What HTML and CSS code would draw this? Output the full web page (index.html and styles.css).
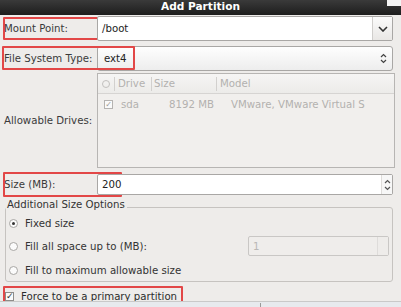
FILE: index.html
```html
<!DOCTYPE html>
<html>
<head>
<meta charset="utf-8">
<title>Add Partition</title>
<link rel="stylesheet" href="styles.css">
</head>
<body>
<div class="title">Add Partition<span class="corner"></span></div>

<div class="row r-mount">
  <span class="hl hl-mount"></span>
  <label class="lbl">Mount Point:</label>
  <div class="entry combo-entry">
    <span class="val">/boot</span>
    <span class="drop">
      <svg width="10" height="6" viewBox="0 0 10 6"><path d="M1 1 L5 5 L9 1" fill="none" stroke="#333" stroke-width="1.6"/></svg>
    </span>
  </div>
</div>

<div class="row r-fs">
  <span class="hl hl-fs"></span>
  <label class="lbl">File System Type:</label>
  <div class="combo">
    <span class="val">ext4</span>
    <svg class="updown" width="7" height="11" viewBox="0 0 7 11"><path d="M1 4 L3.5 1.5 L6 4 M1 7 L3.5 9.5 L6 7" fill="none" stroke="#444" stroke-width="1.2"/></svg>
  </div>
</div>

<div class="row r-drives">
  <label class="lbl">Allowable Drives:</label>
  <div class="tree">
    <div class="thead">
      <span class="c c1"><i class="circ"></i></span>
      <span class="c c2">Drive</span>
      <span class="c c3">Size</span>
      <span class="c c4">Model</span>
    </div>
    <div class="trow">
      <span class="c c1"><i class="chk">&#10003;</i></span>
      <span class="c c2">sda</span>
      <span class="c c3">8192 MB</span>
      <span class="c c4">VMware, VMware Virtual S</span>
    </div>
  </div>
</div>

<div class="row r-size">
  <span class="hl hl-size"></span>
  <label class="lbl">Size (MB):</label>
  <div class="entry spin">
    <span class="val">200</span>
    <span class="arrows">
      <svg width="7" height="14" viewBox="0 0 7 14"><path d="M1 5 L3.5 2.5 L6 5 M1 9 L3.5 11.5 L6 9" fill="none" stroke="#555" stroke-width="1.2"/></svg>
    </span>
  </div>
</div>

<fieldset class="frame">
  <legend>Additional Size Options</legend>
  <div class="opt o1"><i class="radio on"></i>Fixed size</div>
  <div class="opt o2"><i class="radio"></i>Fill all space up to (MB):
    <div class="spin-off"><span class="val">1</span><span class="arrows"></span></div>
  </div>
  <div class="opt o3"><i class="radio"></i>Fill to maximum allowable size</div>
</fieldset>

<div class="row r-force">
  <span class="hl hl-force"></span>
  <i class="cbox">&#10003;</i>Force to be a primary partition
</div>

<div class="strip"><span class="tick"></span></div>
</body>
</html>
```

FILE: styles.css
```css
*{ margin:0; padding:0; box-sizing:border-box;}
body{ width:401px; height:307px; overflow:hidden; position:relative; background:#eeecea; font-family:"DejaVu Sans", sans-serif; font-size:10.2px; color:#3a3a3a;}

.title{ height:15px; background:linear-gradient(#3a3a3a,#1d1d1d); color:#fff; font-weight:bold; font-size:10.6px; line-height:13px; text-align:center; position:relative;}
.corner{ position:absolute; right:0; top:0; width:14px; height:6px; background:#f4f4f4;}

.row{ display:flex; align-items:center; position:relative; padding-left:4px;}
.lbl{ width:93px; white-space:nowrap;}
.hl{ position:absolute; border:2px solid #e24747; border-radius:1px;}

.entry{ width:296px; background:#fff; border:1px solid #a9a7a5; border-radius:2px; display:flex; align-items:center; position:relative;}
.val{ padding-left:4px; color:#222;}

.r-mount{ margin-top:1px; height:25px;}
.r-mount .entry{ height:25px;}
.hl-mount{ left:3px; top:1px; width:128px; height:23px;}
.drop{ margin-left:auto; width:20px; height:23px; border-left:1px solid #d0cecc; background:linear-gradient(#fbfbfb,#e9e7e5); display:flex; align-items:center; justify-content:center;}

.r-fs{ margin-top:5px; height:25px;}
.hl-fs{ left:2px; top:0; width:133px; height:24px;}
.combo{ width:296px; height:25px; border:1px solid #a9a7a5; border-radius:3px; background:linear-gradient(#fefefe,#ededed); display:flex; align-items:center;}
.combo .val{ padding-left:6px;}
.updown{ margin-left:auto; margin-right:5px;}

.r-drives{ margin-top:2px; height:95px;}
.tree{ width:298px; height:95px; border:1px solid #b7b5b3; background:#f1efed; color:#b3b1af;}
.thead{ height:20px; display:flex; align-items:center; border-bottom:1px solid #d6d4d2; background:linear-gradient(#f6f5f4,#ecebe9);}
.trow{ height:18px; display:flex; align-items:center; margin-top:1px;}
.c{ display:flex; align-items:center; height:14px; white-space:nowrap;}
.thead .c{ border-right:1px solid #d2d0ce;}
.thead .c4{ border-right:none;}
.c1{ width:17px; justify-content:center;}
.c2{ width:37px; padding-left:3px;}
.c3{ width:65px; padding-left:2px;}
.c4{ padding-left:3px;}
.trow .c2{ padding-left:6px;}
.trow .c3{ padding-left:17px;}
.trow .c4{ padding-left:14px;}
.circ{ width:8px; height:8px; border:1px solid #c2c0be; border-radius:50%;}
.chk{ width:9px; height:9px; border:1px solid #b5b3b1; background:#fafafa; font-style:normal; font-size:8px; line-height:7px; text-align:center; color:#9a9896; margin-left:4px;}

.r-size{ margin-top:6px; height:21px;}
.r-size .entry{ height:21px;}
.hl-size{ left:3px; top:-2px; width:119px; height:25px;}
.arrows{ margin-left:auto; width:11px; height:19px; border-left:1px solid #dedcda; display:flex; align-items:center; justify-content:center; background:#f7f7f7;}

.frame{ margin:4px 0 0 5px; width:388px; height:83px; border:1px solid #c6c3c0; border-radius:3px;}
.frame legend{ padding:0 2px 4px 1px; line-height:12px; color:#333;}
.opt{ display:flex; align-items:center; padding-left:3px; color:#333;}
.o1{ height:16px;}
.o2{ height:22px; margin-top:4px;}
.o3{ height:22px; margin-top:2px;}
.radio{ width:9px; height:9px; border:1px solid #a8a6a4; border-radius:50%; background:#fbfbfb; margin-right:7px; position:relative;}
.radio.on::after{ content:""; position:absolute; left:2px; top:2px; width:3px; height:3px; border-radius:50%; background:#333;}
.spin-off{ margin-left:auto; margin-right:3px; width:141px; height:20px; border:1px solid #c9c7c5; border-radius:2px; display:flex; align-items:center; background:#efedeb;}
.spin-off .val{ color:#b9b7b5;}
.spin-off .arrows{ height:18px; background:#eeecea;}

.r-force{ margin-top:5px; height:18px; color:#2c2c2c;}
.hl-force{ left:3px; top:-1px; width:180px; height:21px;}
.cbox{ width:9px; height:9px; border:1px solid #8e8c8a; background:#fafafa; font-style:normal; font-size:9px; line-height:7px; text-align:center; color:#333; margin:0 7px 0 1px;}

.strip{ position:absolute; left:0; right:0; bottom:0; height:6px; background:#e7eaee; border-top:1px solid #c9c9c9;}
.tick{ position:absolute; left:260px; top:1px; width:1px; height:5px; background:#9a9a9a;}
```
